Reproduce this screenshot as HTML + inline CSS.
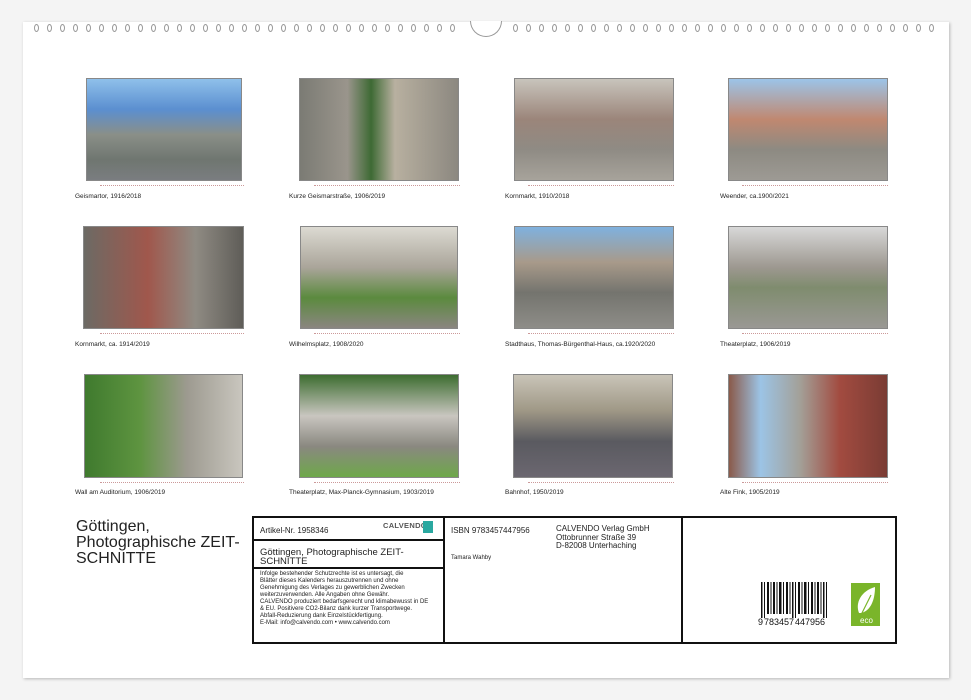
<!DOCTYPE html>
<html><head><meta charset="utf-8"><style>
*{margin:0;padding:0;box-sizing:border-box}
body{width:971px;height:700px;background:#f4f4f4;position:relative;overflow:hidden;font-family:"Liberation Sans",sans-serif;color:#222}
.page{position:absolute;left:23px;top:22px;width:926px;height:656px;background:#fff;box-shadow:1px 1px 3px rgba(0,0,0,.25)}
.holes{position:absolute;top:24px;height:9px;display:flex;gap:8px}
.holes i{display:block;width:5px;height:8px;border:1px solid #999;border-radius:50%}
.notch{position:absolute;left:470px;top:21px;width:32px;height:16px;border:1px solid #999;border-top:none;border-radius:0 0 16px 16px;background:#fff}
.ph{position:absolute;border:1px solid #888;overflow:hidden}
.cap{position:absolute;font-size:6.5px;color:#222}
.tiny{position:absolute;height:2px;border-top:1px dotted #c99}
.box{position:absolute;border:2px solid #111}
.t{position:absolute;font-size:8px;line-height:9px}
</style></head><body>
<div class="page"></div>
<div class="holes" style="left:34px">
<i></i><i></i><i></i><i></i><i></i><i></i><i></i><i></i><i></i><i></i><i></i><i></i><i></i><i></i><i></i><i></i><i></i><i></i><i></i><i></i><i></i><i></i><i></i><i></i><i></i><i></i><i></i><i></i><i></i><i></i><i></i><i></i><i></i></div>
<div class="notch"></div>
<div class="holes" style="left:513px">
<i></i><i></i><i></i><i></i><i></i><i></i><i></i><i></i><i></i><i></i><i></i><i></i><i></i><i></i><i></i><i></i><i></i><i></i><i></i><i></i><i></i><i></i><i></i><i></i><i></i><i></i><i></i><i></i><i></i><i></i><i></i><i></i><i></i></div>

<!-- row 1 -->
<div class="ph" style="left:86px;top:78px;width:156px;height:103px;background:linear-gradient(180deg,#8fc0ea 0%,#5b8fd0 30%,#8a8f88 55%,#6f7670 80%,#7a7d80 100%)"></div>
<div class="ph" style="left:299px;top:78px;width:160px;height:103px;background:linear-gradient(90deg,#7b7b74 0%,#9a958c 30%,#3e6a34 45%,#b8b0a0 60%,#8c8880 100%)"></div>
<div class="ph" style="left:514px;top:78px;width:160px;height:103px;background:linear-gradient(180deg,#c8c4bc 0%,#9b857a 40%,#8f8b84 70%,#a7a39b 100%)"></div>
<div class="ph" style="left:728px;top:78px;width:160px;height:103px;background:linear-gradient(180deg,#9cc4e8 0%,#c08870 40%,#8d8a82 70%,#9d9a94 100%)"></div>
<!-- row 2 -->
<div class="ph" style="left:83px;top:226px;width:161px;height:103px;background:linear-gradient(90deg,#6c6a64 0%,#a0574c 40%,#8f8b83 70%,#5f5d58 100%)"></div>
<div class="ph" style="left:300px;top:226px;width:158px;height:103px;background:linear-gradient(180deg,#dcdad2 0%,#aaa59a 40%,#5b8a3e 70%,#8a8680 100%)"></div>
<div class="ph" style="left:514px;top:226px;width:160px;height:103px;background:linear-gradient(180deg,#7fb1de 0%,#a89a8a 35%,#74746e 65%,#8e8d88 100%)"></div>
<div class="ph" style="left:728px;top:226px;width:160px;height:103px;background:linear-gradient(180deg,#d8d8d8 0%,#9d9890 40%,#7f8c6e 60%,#9a9894 100%)"></div>
<!-- row 3 -->
<div class="ph" style="left:84px;top:374px;width:159px;height:104px;background:linear-gradient(90deg,#3f7a2e 0%,#5e9440 35%,#9d9a90 65%,#c9c6be 100%)"></div>
<div class="ph" style="left:299px;top:374px;width:160px;height:104px;background:linear-gradient(180deg,#3d6d30 0%,#c9c6c0 40%,#8a8880 70%,#6ea84a 100%)"></div>
<div class="ph" style="left:513px;top:374px;width:160px;height:104px;background:linear-gradient(180deg,#c9c4b8 0%,#9f9886 35%,#5a5a60 65%,#6b6770 100%)"></div>
<div class="ph" style="left:728px;top:374px;width:160px;height:104px;background:linear-gradient(90deg,#8a5a4a 0%,#9cc4e6 20%,#a3a098 45%,#a24b40 70%,#7a3c34 100%)"></div>

<div class="cap" style="left:75px;top:193px">Geismartor, 1916/2018</div>
<div class="cap" style="left:289px;top:193px">Kurze Geismarstraße, 1906/2019</div>
<div class="cap" style="left:505px;top:193px">Kornmarkt, 1910/2018</div>
<div class="cap" style="left:720px;top:193px">Weender, ca.1900/2021</div>
<div class="cap" style="left:75px;top:341px">Kornmarkt, ca. 1914/2019</div>
<div class="cap" style="left:289px;top:341px">Wilhelmsplatz, 1908/2020</div>
<div class="cap" style="left:505px;top:341px">Stadthaus, Thomas-Bürgenthal-Haus, ca.1920/2020</div>
<div class="cap" style="left:720px;top:341px">Theaterplatz, 1906/2019</div>
<div class="cap" style="left:75px;top:489px">Wall am Auditorium, 1906/2019</div>
<div class="cap" style="left:289px;top:489px">Theaterplatz, Max-Planck-Gymnasium, 1903/2019</div>
<div class="cap" style="left:505px;top:489px">Bahnhof, 1950/2019</div>
<div class="cap" style="left:720px;top:489px">Alte Fink, 1905/2019</div>

<div class="tiny" style="left:100px;top:185px;width:144px"></div>
<div class="tiny" style="left:314px;top:185px;width:146px"></div>
<div class="tiny" style="left:528px;top:185px;width:146px"></div>
<div class="tiny" style="left:742px;top:185px;width:146px"></div>
<div class="tiny" style="left:100px;top:333px;width:144px"></div>
<div class="tiny" style="left:314px;top:333px;width:146px"></div>
<div class="tiny" style="left:528px;top:333px;width:146px"></div>
<div class="tiny" style="left:742px;top:333px;width:146px"></div>
<div class="tiny" style="left:100px;top:482px;width:144px"></div>
<div class="tiny" style="left:314px;top:482px;width:146px"></div>
<div class="tiny" style="left:528px;top:482px;width:146px"></div>
<div class="tiny" style="left:742px;top:482px;width:146px"></div>

<div style="position:absolute;left:76px;top:519px;font-size:16px;line-height:16px;color:#222">Göttingen,<br>Photographische ZEIT-<br>SCHNITTE</div>

<div class="box" style="left:252px;top:516px;width:645px;height:128px"></div>
<div style="position:absolute;left:443px;top:516px;width:2px;height:128px;background:#111"></div>
<div style="position:absolute;left:681px;top:516px;width:2px;height:128px;background:#111"></div>
<div style="position:absolute;left:252px;top:539px;width:192px;height:2px;background:#111"></div>
<div style="position:absolute;left:252px;top:567px;width:192px;height:2px;background:#111"></div>

<div class="t" style="left:260px;top:526px">Artikel-Nr. 1958346</div>
<div style="position:absolute;left:383px;top:521px;font-size:7.5px;font-weight:bold;color:#555;letter-spacing:.3px">CALVENDO</div>
<div style="position:absolute;left:423px;top:521px;width:10px;height:12px;background:#2aa8a0"></div>
<div class="t" style="left:260px;top:548px;font-size:9.5px;line-height:9px">Göttingen, Photographische ZEIT-<br>SCHNITTE</div>
<div class="t" style="left:260px;top:571px;font-size:6px;line-height:7px">Infolge bestehender Schutzrechte ist es untersagt, die<br>Blätter dieses Kalenders herauszutrennen und ohne<br>Genehmigung des Verlages zu gewerblichen Zwecken<br>weiterzuverwenden. Alle Angaben ohne Gewähr.<br>CALVENDO produziert bedarfsgerecht und klimabewusst in DE<br>&amp; EU. Positivere CO2-Bilanz dank kurzer Transportwege.<br>Abfall-Reduzierung dank Einzelstückfertigung.<br>E-Mail: info@calvendo.com • www.calvendo.com</div>
<div class="t" style="left:451px;top:526px">ISBN 9783457447956</div>
<div class="t" style="left:556px;top:525px;line-height:8.5px">CALVENDO Verlag GmbH<br>Ottobrunner Straße 39<br>D-82008 Unterhaching</div>
<div class="t" style="left:451px;top:554px;font-size:6px">Tamara Wahby</div>

<svg style="position:absolute;left:758px;top:582px" width="72" height="45">
<g fill="#111">
<rect x="3" y="0" width="1.5" height="36"/><rect x="6" y="0" width="1" height="36"/><rect x="9" y="0" width="2" height="32"/><rect x="12.5" y="0" width="1" height="32"/><rect x="15" y="0" width="2" height="32"/><rect x="18.5" y="0" width="1" height="32"/><rect x="21" y="0" width="2.5" height="32"/><rect x="25" y="0" width="1" height="32"/><rect x="28" y="0" width="2" height="32"/><rect x="31.5" y="0" width="1" height="32"/><rect x="34" y="0" width="1.5" height="36"/><rect x="37" y="0" width="1" height="36"/><rect x="40" y="0" width="2" height="32"/><rect x="43.5" y="0" width="1" height="32"/><rect x="46" y="0" width="2.5" height="32"/><rect x="50" y="0" width="1" height="32"/><rect x="53" y="0" width="2" height="32"/><rect x="56.5" y="0" width="1" height="32"/><rect x="59" y="0" width="2" height="32"/><rect x="62.5" y="0" width="1" height="32"/><rect x="65" y="0" width="1.5" height="36"/><rect x="68" y="0" width="1" height="36"/>
</g>
<text x="0" y="43" font-family="Liberation Sans" font-size="9" fill="#111">9</text>
<text x="6" y="43" font-family="Liberation Sans" font-size="9" fill="#111">783457</text>
<text x="37" y="43" font-family="Liberation Sans" font-size="9" fill="#111">447956</text>
</svg>
<div style="position:absolute;left:851px;top:583px;width:29px;height:43px;background:#7ab52a"></div>
<svg style="position:absolute;left:851px;top:583px" width="29" height="43"><path d="M8 30 C4 20 10 8 24 4 C24 16 20 28 10 30 Z" fill="#fff"/><path d="M10 32 L20 12" stroke="#7ab52a" stroke-width="1.2"/><text x="9" y="40" font-family="Liberation Sans" font-size="8" fill="#fff">eco</text></svg>
</body></html>
